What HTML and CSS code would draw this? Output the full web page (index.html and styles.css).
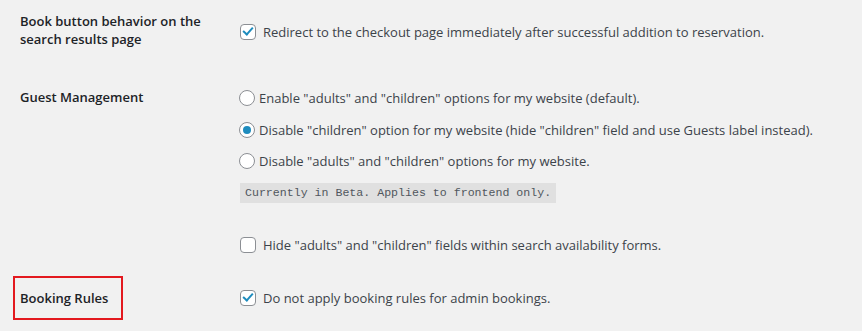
FILE: index.html
```html
<!DOCTYPE html>
<html>
<head>
    <meta charset="UTF-8">
    <title>Settings</title>
    <link rel="stylesheet" href="styles.css">
</head>
<body>
    <div class="wrap">
        <div class="form-table">

            <div class="form-row">
                <div class="row-label">Book button behavior on the search results page</div>
                <div class="row-field">
                    <label class="option">
                        <span class="checkbox checked"></span>
                        Redirect to the checkout page immediately after successful addition to reservation.
                    </label>
                </div>
            </div>

            <div class="form-row">
                <div class="row-label">Guest Management</div>
                <div class="row-field">
                    <div class="radio-list">
                        <label class="option radio-option">
                            <span class="radio"></span>Enable "adults" and "children" options for my website (default).
                        </label>
                        <label class="option radio-option">
                            <span class="radio checked"></span>Disable "children" option for my website (hide "children" field and use Guests label instead).
                        </label>
                        <label class="option radio-option">
                            <span class="radio"></span>Disable "adults" and "children" options for my website.
                        </label>
                    </div>
                    <p class="description"><code>Currently in Beta. Applies to frontend only.</code></p>
                    <label class="option hide-option">
                        <span class="checkbox"></span>
                        Hide "adults" and "children" fields within search availability forms.
                    </label>
                </div>
            </div>

            <div class="form-row">
                <div class="row-label"><span class="highlight">Booking Rules</span></div>
                <div class="row-field">
                    <label class="option">
                        <span class="checkbox checked"></span>
                        Do not apply booking rules for admin bookings.
                    </label>
                </div>
            </div>

        </div>
    </div>
</body>
</html>
```
FILE: styles.css
```css
*, *::before, *::after {
    box-sizing: border-box;
    margin: 0;
    padding: 0;
}

body {
    background: #f1f1f1;
    color: #3c434a;
    font-family: "Open Sans", "Liberation Sans", sans-serif;
    font-size: 13px;
    line-height: 18px;
}

.wrap {
    padding: 0 20px;
}

/* page is scrolled a little into the first row */
.form-table {
    margin-top: -8px;
}

.form-row {
    display: grid;
    grid-template-columns: 210px 1fr;
}

.row-label {
    padding: 20px 10px 20px 0;
    color: #1d2327;
    font-weight: 600;
}

.row-field {
    align-self: center;
    padding: 15px 10px;
}

.form-row:first-child .row-field {
    padding-top: 18px;
}

.option {
    display: flex;
    align-items: center;
    height: 18px;
    white-space: nowrap;
}

.checkbox {
    position: relative;
    flex: none;
    width: 16px;
    height: 16px;
    margin-right: 7px;
    background: #fff;
    border: 1px solid #8c8f94;
    border-radius: 4px;
}

.checkbox.checked::after {
    content: "";
    position: absolute;
    left: 4px;
    top: 0px;
    width: 6px;
    height: 10px;
    border: solid #1e8cbe;
    border-width: 0 2.5px 2.5px 0;
    transform: rotate(42deg);
}

.radio {
    position: relative;
    flex: none;
    width: 16px;
    height: 16px;
    margin: 0 4px 0 -1px;
    background: #fff;
    border: 1px solid #8c8f94;
    border-radius: 50%;
}

.radio.checked::after {
    content: "";
    position: absolute;
    left: 3px;
    top: 3px;
    width: 8px;
    height: 8px;
    border-radius: 50%;
    background: #1e8cbe;
}

.radio-list {
    display: flex;
    flex-direction: column;
    gap: 13.5px;
    margin-top: 6px;
}

.description {
    margin-top: 11.5px;
}

code {
    display: inline-block;
    padding: 3px 5px;
    background: rgba(0, 0, 0, 0.07);
    color: #50575e;
    font-family: "Liberation Mono", monospace;
    font-size: 11.6px;
    line-height: 14px;
}

.hide-option {
    margin-top: 33px;
}

.highlight {
    position: relative;
    display: inline-block;
}

/* red annotation frame around the label */
.highlight::after {
    content: "";
    position: absolute;
    left: -7px;
    top: -13px;
    width: 110px;
    height: 44px;
    border: 2px solid #e3191f;
}
```
